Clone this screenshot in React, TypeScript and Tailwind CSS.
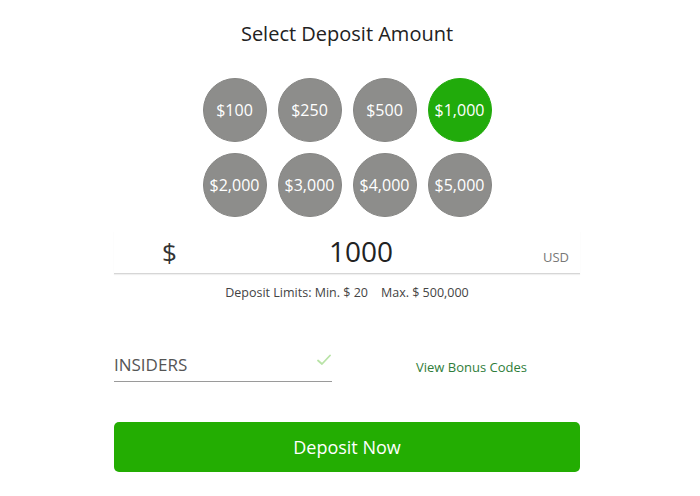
import React from "react";

const amounts = ["$100", "$250", "$500", "$1,000", "$2,000", "$3,000", "$4,000", "$5,000"];

export default function App() {
  return (
    <div className="w-[700px] h-[496px] bg-white" style={{ fontFamily: '"Open Sans", sans-serif' }}>
      <div className="ml-[114px] w-[466px] flex flex-col">
        <div className="pt-[20px] text-center text-[20px] leading-[28px] text-[#222]">Select Deposit Amount</div>
        <div className="mt-[30px] mx-auto grid grid-cols-4 gap-x-[11px] gap-y-[11px] w-[289px]">
          {amounts.map((a) => (
            <div
              key={a}
              className={`w-[64px] h-[64px] rounded-full flex items-center justify-center text-white text-[16px] ${
                a === "$1,000" ? "bg-[#21ab0b] border border-[#21ab0b]" : "bg-[#8d8d8b] border border-[#858583]"
              }`}
            >
              {a}
            </div>
          ))}
        </div>
        <div className="mt-[14px] relative h-[43px] border-b border-[#d6d6d6] shadow-[0_1px_1px_rgba(0,0,0,0.06)] flex items-center">
          <span className="absolute left-[48px] top-[3px] text-[26px] leading-[36px] text-[#333]">$</span>
          <span className="absolute left-0 right-0 top-[1px] text-center pl-[28px] text-[28px] leading-[38px] text-[#222]">1000</span>
          <span className="absolute right-[11px] top-[17px] text-[13px] leading-[18px] text-[#777]">USD</span>
        </div>
        <div className="mt-[11px] text-center text-[12.5px] leading-[16px] text-[#444]">
          Deposit Limits: Min. $ 20&nbsp;&nbsp;&nbsp; Max. $ 500,000
        </div>
        <div className="mt-[50px] flex items-end">
          <div className="relative w-[218px] h-[31px] border-b border-[#9a9a9a]">
            <span className="absolute left-0 top-[2px] text-[17px] leading-[24px] text-[#555]">INSIDERS</span>
            <svg className="absolute right-[1px] top-[3px]" width="14" height="12" viewBox="0 0 14 12">
              <path d="M1 6.5 L5 10 L13 1.5" fill="none" stroke="#b8e3a6" strokeWidth="1.8" strokeLinecap="round" strokeLinejoin="round" />
            </svg>
          </div>
          <span className="ml-[84px] mb-[6px] text-[13px] leading-[18px] text-[#2f7d3a]">View Bonus Codes</span>
        </div>
        <button className="mt-[40px] h-[50px] w-full rounded-[5px] bg-[#23ad02] text-white text-[18px] flex items-center justify-center">
          Deposit Now
        </button>
      </div>
    </div>
  );
}
